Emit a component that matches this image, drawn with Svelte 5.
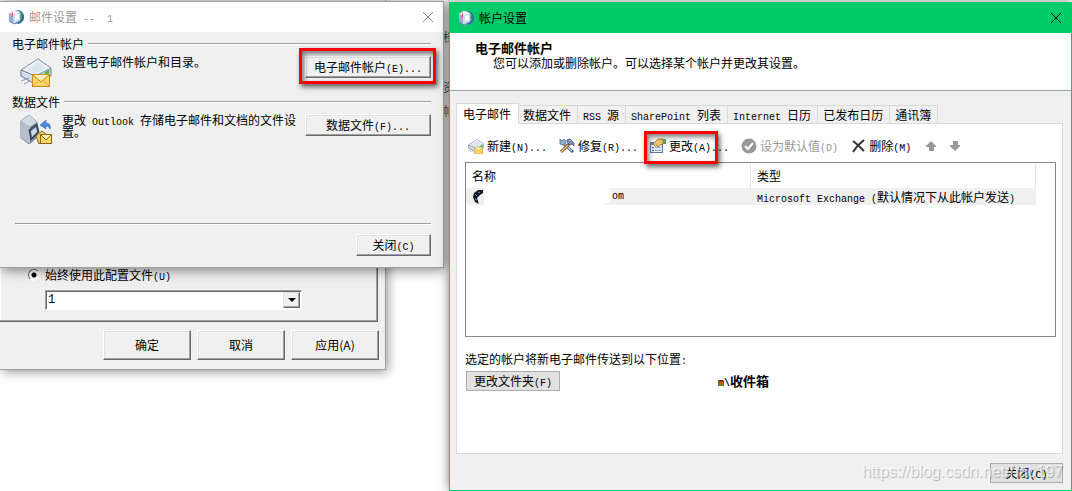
<script>
  const tabs = ['电子邮件', '数据文件', 'RSS 源', 'SharePoint 列表', 'Internet 日历', '已发布日历', '通讯簿'];
  const accounts = [
    { name: 'om', type: 'Microsoft Exchange (默认情况下从此帐户发送)' }
  ];

  let activeTab = $state('电子邮件');
  let profile = $state('1');
  let profileMode = $state('always');

  // Latin runs are set in a half-width face, six pixels per character
  function runs(text) {
    return text.match(/[\x20-\x7e]+|[^\x20-\x7e]+/g) ?? [];
  }
</script>

{#snippet mixed(text)}
  {#each runs(text) as run}{#if run.charCodeAt(0) < 127}<span class="half">{run}</span>{:else}{run}{/if}{/each}
{/snippet}

{#snippet appIcon()}
  <svg class="app-icon" width="16" height="16" viewBox="0 0 16 16" aria-hidden="true">
    <circle cx="9" cy="8" r="7" fill="#5aa5d6" />
    <path d="M10 1c4 1 6 4 6 7 0 4-3 6-6 7z" fill="#2f6f96" />
    <path d="M11 2l3 3-1 2 1 2-2 3z" fill="#5fb083" />
    <path d="M1 4l5-3 6 2v9l-6 3-5-3z" fill="#c9dcee" />
    <path d="M1 4l4 1v9l-4-2z" fill="#93afd2" />
    <path d="M1 4l5-3 6 2-6 2z" fill="#edf5fb" />
    <path d="M7 6l4-1v5l-4 1z" fill="#fff" />
    <path d="M4.500 3v5" stroke="#d8654e" />
    <path d="M1 12l5 3 6-3" fill="none" stroke="#7080b0" />
  </svg>
{/snippet}

{#snippet driveMail(size)}
  <svg width={size} height={size} viewBox="0 0 32 32" aria-hidden="true">
    <path d="M1 14L18 3l13 9v8l-16 8L1 20z" fill="#b9c8d8" stroke="#7c8ea3" />
    <path d="M1 14L18 3l13 9-16 8z" fill="#eef3f7" stroke="#8c9caf" />
    <path d="M6 14l12-8 8 6-11 6z" fill="#dce5ed" />
    <path d="M1 14l14 6v8L1 20z" fill="#d3deea" stroke="#7589a3" />
    <path d="M25 16l4-2v3l-4 2z" fill="#3fc41c" />
    <path d="M1 25l8-3M4 28l6-3" stroke="#8fa0b5" />
    <rect x="12.500" y="18.500" width="17" height="12" fill="#ffd767" stroke="#c98b1b" />
    <path d="M13 19l8 7 8-7" fill="#fff2b8" stroke="#c98b1b" />
    <path d="M13 30l6-6M29 30l-6-6" stroke="#dda63a" />
  </svg>
{/snippet}

<main class="desktop">
  <section class="left">
    <div class="page-text" aria-hidden="true">
      <span class="green">档</span>
      <span>资</span>
      <span class="amber">帕</span>
    </div>

    <form class="window profile">
      <fieldset class="profile-box">
        <label class="radio">
          <input type="radio" name="mode" value="always" bind:group={profileMode} />
          <span>{@render mixed('始终使用此配置文件(U)')}</span>
        </label>
        <div class="combo">
          <select aria-label="配置文件" bind:value={profile}>
            <option value="1">1</option>
          </select>
          <span class="combo-arrow" aria-hidden="true">
            <svg width="8" height="4" viewBox="0 0 8 4"><path d="M0 0h8L4 4z" /></svg>
          </span>
        </div>
      </fieldset>
      <div class="profile-actions">
        <button type="button" class="raised">确定</button>
        <button type="button" class="raised">取消</button>
        <button type="button" class="raised">应用(A)</button>
      </div>
    </form>

    <div class="window mail" role="dialog" aria-label="邮件设置">
      <header class="title-bar">
        {@render appIcon()}
        <h1>{@render mixed('邮件设置 --  1')}</h1>
        <button class="close" aria-label="关闭窗口">
          <svg width="12" height="12" viewBox="0 0 12 12"><path d="M1 1l10 10M11 1L1 11" /></svg>
        </button>
      </header>

      <div class="mail-body">
        <h2 class="group-title">电子邮件帐户</h2>
        <div class="group">
          {@render driveMail(32)}
          <p>设置电子邮件帐户和目录。</p>
          <div class="callout">
            <button class="raised">{@render mixed('电子邮件帐户(E)...')}</button>
          </div>
        </div>

        <h2 class="group-title">数据文件</h2>
        <div class="group">
          <svg width="32" height="32" viewBox="0 0 32 32" aria-hidden="true">
            <path d="M1 7l8-6 8 7v15l-8 7-8-6z" fill="#9daabc" stroke="#76849a" />
            <path d="M1 7l8-6 8 7-7 5z" fill="#d2dae4" />
            <path d="M1 7l9 6v17l-9-6z" fill="#b5bfcc" />
            <path d="M10 13l7-5v15l-7 7z" fill="#7c8a9f" />
            <path d="M9 16l8-6 2 8-8 8z" fill="#4c5b70" stroke="#2f3c4e" />
            <path d="M11 17l5-4 1 5-5 5z" fill="#c9d8e8" />
            <path d="M20 11l6-5v3c4 0 5 3 4 6-1-2-2-3-4-3v3z" fill="#4d8be0" stroke="#2f66b8" stroke-width=".6" />
            <path d="M16 22l6-5 5 4-8 9z" fill="#efcf6f" stroke="#8a6914" />
            <rect x="20.500" y="20.500" width="11" height="9" fill="#ffd767" stroke="#8a6914" />
            <path d="M21 21l5 5 5-5" fill="#fff1b0" stroke="#8a6914" />
          </svg>
          <p>{@render mixed('更改 Outlook 存储电子邮件和文档的文件设置。')}</p>
          <button class="raised">{@render mixed('数据文件(F)...')}</button>
        </div>

        <footer class="mail-footer">
          <button class="raised">{@render mixed('关闭(C)')}</button>
        </footer>
      </div>
    </div>
  </section>

  <section class="window accounts" aria-label="帐户设置">
    <header class="title-bar">
      {@render appIcon()}
      <h1>帐户设置</h1>
      <button class="close" aria-label="关闭窗口">
        <svg width="12" height="12" viewBox="0 0 12 12"><path d="M1 1l10 10M11 1L1 11" /></svg>
      </button>
    </header>

    <div class="intro">
      <h2>电子邮件帐户</h2>
      <p>您可以添加或删除帐户。可以选择某个帐户并更改其设置。</p>
    </div>

    <div class="accounts-body">
      <div class="tabs" role="tablist">
        {#each tabs as tab}
          <button role="tab" class="tab" class:active={tab === activeTab} aria-selected={tab === activeTab} onclick={() => (activeTab = tab)}>{@render mixed(tab)}</button>
        {/each}
      </div>

      <div class="panel">
        <div class="toolbar">
          <button class="tool">
            {@render driveMail(16)}
            <span>{@render mixed('新建(N)...')}</span>
          </button>
          <button class="tool">
            <svg width="16" height="16" viewBox="0 0 16 16" aria-hidden="true">
              <path d="M4 5l10 9" stroke="#40536e" stroke-width="3" />
              <path d="M4 5l9 8" stroke="#c3d3e6" stroke-width="1.400" />
              <path d="M1 1l2 2 2-2 2 3-2 3-4-1z" fill="#9db4d0" stroke="#4d6788" stroke-width=".8" />
              <path d="M2 14l8-8" stroke="#7a5620" stroke-width="3" />
              <path d="M2 14l7-7" stroke="#e2b865" stroke-width="1.400" />
              <path d="M8 2l3-1 4 4v3l-2-2-2 1-3-3z" fill="#7d96b8" stroke="#3f5878" stroke-width=".8" />
            </svg>
            <span>{@render mixed('修复(R)...')}</span>
          </button>
          <div class="callout tight">
            <button class="tool">
              <svg width="16" height="16" viewBox="0 0 16 16" aria-hidden="true">
                <rect x="0.500" y="4.500" width="12" height="10" fill="#e4eefa" stroke="#5577a5" />
                <path d="M0 4h13v3H0z" fill="#5c86bd" />
                <path d="M2 9.500h2M2 12.500h2" stroke="#2d5b96" />
                <path d="M5 9.500h6M5 12.500h6" stroke="#93a9c4" />
                <path d="M3 6l5-5h5v5l-3 1-2 2-1-2-2 1z" fill="#f2c765" stroke="#96691a" stroke-width=".8" />
                <path d="M13 1h3v5h-3z" fill="#5fa04f" />
              </svg>
              <span>{@render mixed('更改(A)...')}</span>
            </button>
          </div>
          <button class="tool" disabled>
            <svg width="16" height="16" viewBox="0 0 16 16" aria-hidden="true">
              <circle cx="8" cy="8" r="7.500" fill="#999" />
              <path d="M4 8l3 3 5-6" fill="none" stroke="#fff" stroke-width="2" />
            </svg>
            <span>{@render mixed('设为默认值(D)')}</span>
          </button>
          <button class="tool">
            <svg width="16" height="16" viewBox="0 0 16 16" aria-hidden="true">
              <path d="M3 3c4 3 8 7 11 10" fill="none" stroke="#333" stroke-width="2" />
              <path d="M14 2C9 6 6 9 3 14" fill="none" stroke="#333" stroke-width="2" />
            </svg>
            <span>{@render mixed('删除(M)')}</span>
          </button>
          <div class="moves">
            <button class="tool" disabled aria-label="上移">
              <svg width="16" height="16" viewBox="0 0 16 16" aria-hidden="true"><path d="M8 3l5 5v1h-2v4H6V9H3V8l5-5z" fill="#999" /></svg>
            </button>
            <button class="tool" disabled aria-label="下移">
              <svg width="16" height="16" viewBox="0 0 16 16" aria-hidden="true"><path d="M6 3h5v4h2v1l-5 5-5-5V7h3z" fill="#999" /></svg>
            </button>
          </div>
        </div>

        <div class="list">
          <table>
            <thead>
              <tr><th>名称</th><th>类型</th></tr>
            </thead>
            <tbody>
              {#each accounts as account}
                <tr>
                  <td>
                    <div class="account">
                      <svg width="12" height="16" viewBox="0 0 12 16" aria-hidden="true">
                        <path d="M11 1H6L2 4 1 8l2 5 4 2-2-6 3-3 3-2z" fill="#111c28" />
                        <path d="M3 5l2 2M6 3l2 1M3 10l2 1" stroke="#4f8fc4" />
                      </svg>
                      <span class="smudge"></span>
                      {@render mixed(account.name)}
                    </div>
                  </td>
                  <td>{@render mixed(account.type)}</td>
                </tr>
              {/each}
            </tbody>
          </table>
        </div>

        <p class="hint">{@render mixed('选定的帐户将新电子邮件传送到以下位置:')}</p>
        <div class="folder">
          <button class="flat">{@render mixed('更改文件夹(F)')}</button>
          <strong>{@render mixed('m\\收件箱')}</strong>
        </div>
      </div>

      <footer class="accounts-footer">
        <button class="flat">{@render mixed('关闭(C)')}</button>
        <span class="watermark">https://blog.csdn.net/hao197</span>
      </footer>
    </div>
  </section>
</main>

<style>
  :global(body) {
    background: #fff;
  }

  .desktop {
    display: grid;
    grid-template-columns: 449fr 623fr;
    min-height: 100vh;
    overflow: hidden;
    font-family: "Noto Sans CJK SC", sans-serif;
    font-size: 12px;
    line-height: 14px;
    color: #000;
  }

  .desktop :is(h1, h2, p) {
    margin: 0;
    font-size: 12px;
    font-weight: normal;
  }

  button,
  select {
    font: inherit;
    color: inherit;
    padding: 0;
    margin: 0;
    border: 0;
    background: none;
    white-space: nowrap;
  }

  svg {
    display: block;
    flex: none;
  }

  .half {
    font-family: "Liberation Mono", monospace;
    font-size: 10px;
    line-height: 0;
    white-space: pre-wrap;
  }

  .left {
    position: relative;
  }

  .window {
    box-sizing: border-box;
    background: #f0f0f0;
  }

  .title-bar {
    display: flex;
    align-items: center;
    height: 30px;
    padding: 0 9px 0 8px;
    background: #fff;
  }

  .title-bar h1 {
    flex: 1;
    margin-left: 5px;
    color: #999;
  }

  .close svg {
    fill: none;
    stroke: #888;
  }

  /* Old raised button edges */
  .raised {
    height: 22px;
    background: #f0f0f0;
    border: 1px solid;
    border-color: #fff #696969 #696969 #fff;
    box-shadow: inset -1px -1px #a0a0a0, inset 1px 1px #e3e3e3;
  }

  .callout {
    position: relative;
  }

  .callout::after {
    content: "";
    position: absolute;
    inset: -8px -5px -6px -6px;
    border: 3px solid #f00;
    box-shadow: 2px 3px 5px rgba(0, 0, 0, 0.6), inset 2px 3px 5px rgba(0, 0, 0, 0.5);
    pointer-events: none;
  }

  .callout.tight::after {
    inset: -5px 11px -8px -6px;
  }

  .page-text {
    position: absolute;
    top: 30px;
    right: -6px;
    display: flex;
    flex-direction: column;
    gap: 24px;
    color: #2b5a5a;
  }

  .page-text .green {
    margin-bottom: 12px;
    color: #2d6b3c;
  }

  .page-text .amber {
    margin-top: -14px;
    color: #9a6a10;
  }

  /* Profile window, mostly hidden behind the mail dialog */
  .profile {
    position: absolute;
    top: 0;
    left: 0;
    width: 386px;
    padding-top: 256px;
    border: solid #a0a0a0;
    border-width: 0 1px 1px 0;
    box-shadow: 2px 2px 10px rgba(0, 0, 0, 0.4);
  }

  .profile-box {
    margin: 0 7px 0 0;
    padding: 12px 0 11px 28px;
    border: solid #696969;
    border-width: 0 1px 1px 0;
    box-shadow: inset -1px -1px #a0a0a0, inset 1px 0 #fff;
  }

  .radio {
    display: flex;
    align-items: center;
    gap: 5px;
    height: 14px;
  }

  .radio input {
    appearance: none;
    width: 12px;
    height: 12px;
    margin: 0;
    border: 1px solid;
    border-color: #696969 #fff #fff #696969;
    border-radius: 50%;
    background: #fff;
  }

  .radio input:checked {
    background: radial-gradient(circle, #000 2px, #fff 3px);
  }

  .combo {
    display: flex;
    position: relative;
    width: 257px;
    height: 20px;
    margin: 8px 0 0 17px;
  }

  .combo select {
    appearance: none;
    box-sizing: border-box;
    width: 100%;
    padding-left: 2px;
    font-family: "Liberation Mono", monospace;
    font-size: 12px;
    background: #fff;
    border: 1px solid;
    border-color: #a0a0a0 #fff #fff #a0a0a0;
    box-shadow: inset 1px 1px #696969;
    border-radius: 0;
  }

  .combo-arrow {
    position: absolute;
    inset: 2px 2px 2px auto;
    display: flex;
    align-items: center;
    justify-content: center;
    width: 15px;
    background: #f0f0f0;
    border: 1px solid;
    border-color: #e3e3e3 #696969 #696969 #e3e3e3;
    box-shadow: inset -1px -1px #a0a0a0;
    pointer-events: none;
  }

  .profile-actions {
    display: flex;
    justify-content: flex-end;
    gap: 6px;
    padding: 8px 6px 9px;
  }

  .profile-actions .raised {
    width: 88px;
    height: 30px;
  }

  /* Mail dialog */
  .mail {
    position: relative;
    margin: 1px 5px 0 0;
    border: solid #a0a0a0;
    border-width: 1px 1px 1px 0;
    box-shadow: 2px 2px 12px rgba(0, 0, 0, 0.5);
  }

  .mail-body {
    padding: 5px 12px 11px;
  }

  .group-title {
    display: flex;
    align-items: center;
    gap: 4px;
  }

  .group-title::after {
    content: "";
    flex: 1;
    height: 1px;
    background: #a0a0a0;
    border-bottom: 1px solid #fff;
  }

  .group {
    display: flex;
    align-items: flex-start;
    min-height: 39px;
    padding: 5px 0 0 8px;
  }

  .group p {
    flex: 1;
    padding: 0 4px 0 10px;
    line-height: 12px;
  }

  .group .raised {
    width: 126px;
  }

  .mail-footer {
    display: flex;
    justify-content: flex-end;
    margin: 70px 0 0 3px;
    padding-top: 10px;
    border-top: 1px solid #a0a0a0;
    box-shadow: inset 0 1px #fff;
  }

  .mail-footer .raised {
    width: 75px;
  }

  /* Account settings window */
  .accounts {
    position: relative;
    align-self: start;
    margin-top: 2px;
    border: 1px solid #00cc6a;
    box-shadow: 0 0 10px rgba(0, 0, 0, 0.5);
  }

  .accounts .title-bar {
    background: #00cc6a;
  }

  .accounts .title-bar h1 {
    color: #000;
  }

  .accounts .close svg {
    stroke: #000;
  }

  .intro {
    padding: 7px 25px 20px;
    background: #fff;
    border-bottom: 1px solid #a0a0a0;
  }

  .desktop .intro h2 {
    font-size: 13px;
    font-weight: bold;
    line-height: 16px;
  }

  .intro p {
    margin-left: 18px;
  }

  .accounts-body {
    padding: 12px 8px 7px 6px;
  }

  .tabs {
    display: flex;
    align-items: flex-end;
  }

  .tab {
    height: 18px;
    padding: 0 6px 0 5px;
    border: solid #d9d9d9;
    border-width: 1px 1px 0 0;
  }

  .tab.active {
    position: relative;
    height: 21px;
    margin: 0 -1px -1px 0;
    padding: 0 7px 1px 6px;
    background: #fff;
    border-left-width: 1px;
  }

  .panel {
    padding: 12px 6px 62px 8px;
    background: #fff;
    border: 1px solid #d9d9d9;
  }

  .toolbar {
    display: flex;
    gap: 12px;
    padding-left: 3px;
  }

  .tool {
    display: flex;
    align-items: center;
    gap: 3px;
    height: 20px;
  }

  .tool:disabled {
    color: #999;
  }

  .moves {
    display: flex;
    gap: 8px;
  }

  .list {
    box-sizing: border-box;
    min-height: 175px;
    margin-top: 6px;
    padding: 1px 19px 0 0;
    border: 1px solid #828790;
  }

  table {
    width: 100%;
    table-layout: fixed;
    border-collapse: separate;
    border-spacing: 0;
  }

  th,
  td {
    padding: 0 0 0 6px;
    font-weight: normal;
    text-align: left;
    white-space: nowrap;
  }

  th {
    height: 24px;
    border-right: 1px solid #e5e5e5;
  }

  td {
    height: 17px;
    background: #f0f0f0;
  }

  .account {
    display: flex;
    align-items: center;
  }

  .smudge {
    width: 128px;
    height: 17px;
    background: #fff;
    border-radius: 0 6px 12px 0;
  }

  .hint {
    padding-top: 15px;
  }

  .folder {
    display: flex;
    align-items: center;
    gap: 158px;
    margin: 5px 0 0 1px;
  }

  .folder strong {
    font-size: 13px;
  }

  .flat {
    height: 20px;
    padding: 0 7px;
    background: #e1e1e1;
    border: 1px solid #adadad;
  }

  .accounts-footer {
    position: relative;
    display: flex;
    justify-content: flex-end;
    padding-top: 9px;
  }

  .accounts-footer .flat {
    width: 73px;
  }

  .watermark {
    position: absolute;
    right: 0;
    bottom: 0;
    font-family: "Liberation Sans", sans-serif;
    font-size: 16px;
    line-height: 22px;
    color: rgba(255, 255, 255, 0.7);
    text-shadow: 1px 1px 1px rgba(0, 0, 0, 0.25);
    pointer-events: none;
  }
</style>
